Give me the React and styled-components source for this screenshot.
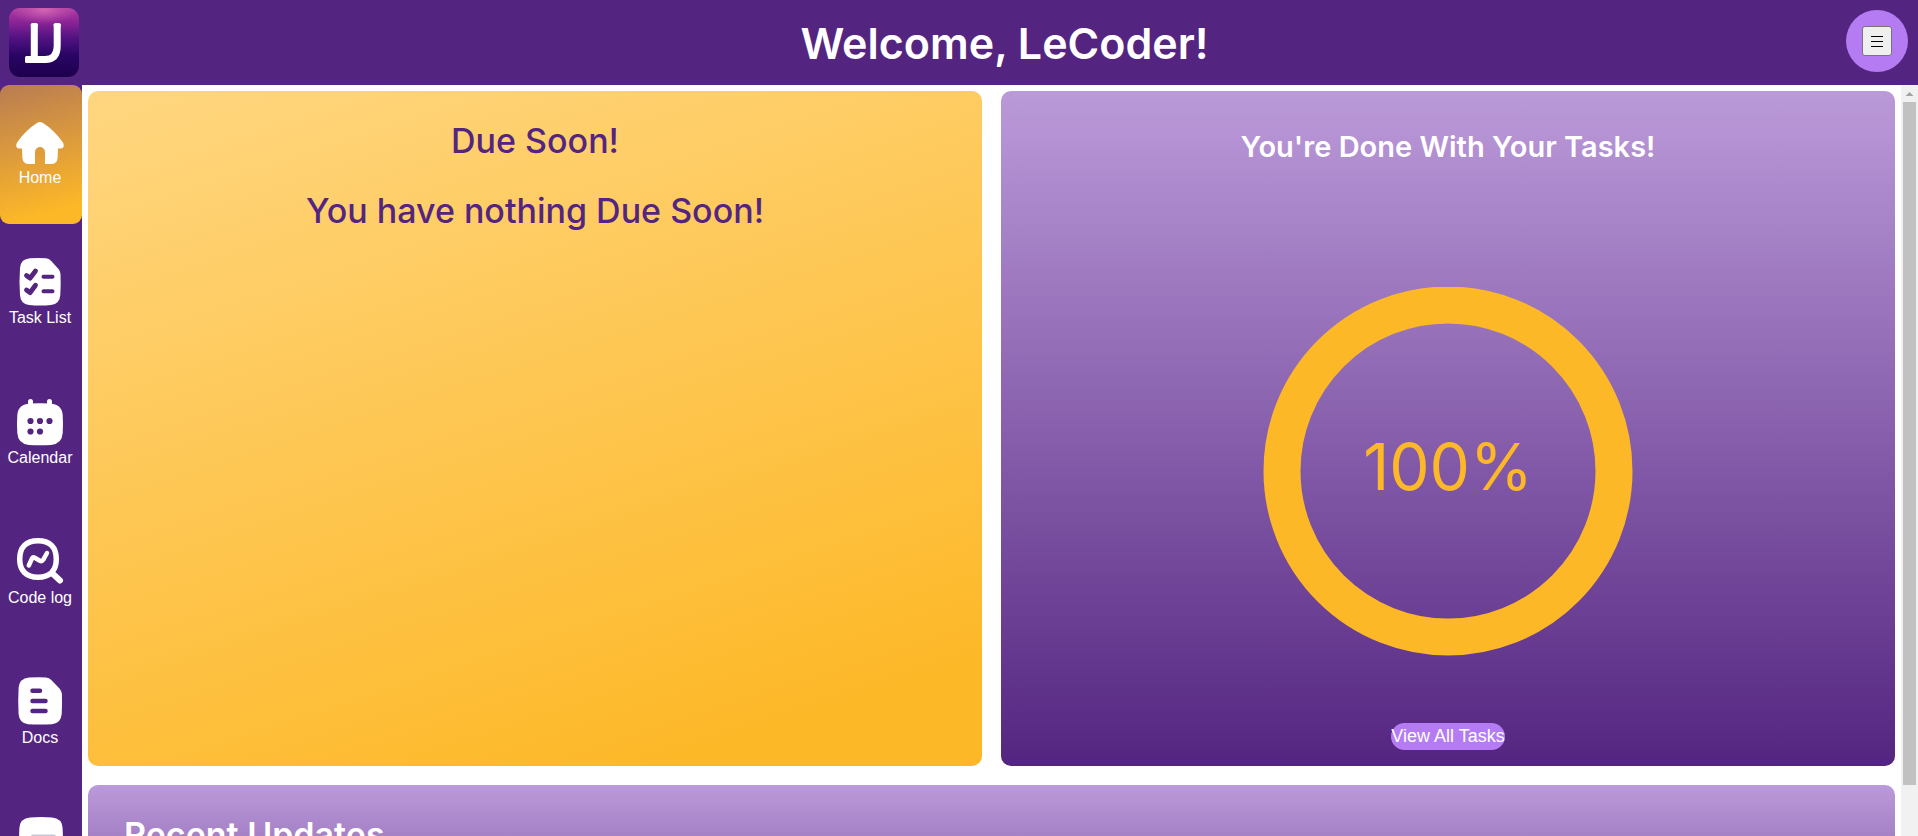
import React from "react";
import styled, { createGlobalStyle } from "styled-components";

const purple = "#542580";
const amber = "#fdb827";
const lilac = "#bb9ad9";
const violet = "#b57bf3";
const headingFont = `Inter, "Liberation Sans", Arial, sans-serif`;

const GlobalStyle = createGlobalStyle`
  *, *::before, *::after { box-sizing: border-box; }
  html, body, #root { height: 100%; }
  body {
    margin: 0;
    overflow: hidden;
    background: #fff;
    font-family: "Liberation Sans", Arial, sans-serif;
  }
  h1, h2, p { margin: 0; }
`;

const Shell = styled.div`
  display: grid;
  grid-template: 85px minmax(0, 1fr) / 82px minmax(0, 1fr);
  height: 100%;
`;

const Header = styled.header`
  grid-column: 1 / -1;
  display: flex;
  align-items: center;
  padding: 0 10px 0 9px;
  background: ${purple};
`;

const LogoLink = styled.a`
  display: block;
  width: 70px;
  height: 70px;
  margin-right: 12px;
`;

const Title = styled.h1`
  flex: 1;
  padding-left: 72px;
  color: #fff;
  font-family: ${headingFont};
  font-size: 43px;
  font-weight: 600;
  line-height: 52px;
  text-align: center;
`;

const Avatar = styled.div`
  display: flex;
  align-items: center;
  justify-content: center;
  width: 62px;
  height: 62px;
  margin-bottom: 3px;
  border-radius: 50%;
  background: ${violet};
`;

const MenuButton = styled.button`
  display: flex;
  align-items: center;
  justify-content: center;
  width: 30px;
  height: 30px;
  padding: 0;
  border: 1px solid #767676;
  border-radius: 3px;
  background: #efefef;
  color: #000;
`;

const Sidebar = styled.nav`
  display: flex;
  flex-direction: column;
  gap: 1px;
  overflow: hidden;
  background: ${purple};
`;

const NavItem = styled.a`
  display: flex;
  flex: none;
  flex-direction: column;
  align-items: center;
  height: 139px;
  padding: 30px 2px 0 0;
  border-radius: 9px;
  background: ${(p) => (p.$active ? `linear-gradient(165deg, #b97c52 0%, ${amber} 88%)` : "transparent")};
  color: #fff;
  font-size: 16px;
  line-height: 18px;
  text-decoration: none;
  white-space: nowrap;
`;

const Main = styled.div`
  display: flex;
  min-height: 0;
`;

const Scroller = styled.main`
  flex: 1;
  display: flex;
  flex-direction: column;
  gap: 19px;
  padding: 6px;
  overflow-y: auto;
  scrollbar-width: none;
`;

const Columns = styled.div`
  display: grid;
  flex: none;
  grid-template-columns: repeat(2, minmax(0, 1fr));
  gap: 19px;
`;

const Card = styled.section`
  display: flex;
  flex-direction: column;
  align-items: center;
  border-radius: 10px;
  background: linear-gradient(180deg, ${lilac}, ${purple});
  color: #fff;
`;

const DueCard = styled(Card)`
  gap: 26px;
  padding: 28px 16px 16px;
  background: linear-gradient(162deg, #ffd680 0%, ${amber} 90%);
  color: ${purple};
`;

const DueText = styled.h2`
  font-family: ${headingFont};
  font-size: 34px;
  font-weight: 500;
  line-height: 44px;
`;

const ProgressCard = styled(Card)`
  padding: 36px 16px 16px;
`;

const CardTitle = styled.h2`
  font-family: ${headingFont};
  font-size: 29px;
  font-weight: 600;
  line-height: 40px;
`;

const Ring = styled.svg`
  display: block;
  width: 370px;
  height: 370px;
  margin: 120px 0 66px;
`;

const RingText = styled.text`
  fill: ${amber};
  font-family: ${headingFont};
  font-size: 64px;
  font-weight: 400;
  text-anchor: middle;
`;

const ViewButton = styled.button`
  height: 27px;
  padding: 0;
  border: 0;
  border-radius: 14px;
  background: ${violet};
  color: #fff;
  font: 18px/27px "Liberation Sans", Arial, sans-serif;
`;

const UpdatesCard = styled(Card)`
  flex: none;
  align-items: flex-start;
  min-height: 240px;
  padding: 28px 36px;
`;

const UpdatesTitle = styled.h2`
  font-family: ${headingFont};
  font-size: 34px;
  font-weight: 600;
  line-height: 44px;
`;

const Rail = styled.div`
  display: flex;
  flex: none;
  flex-direction: column;
  align-items: center;
  width: 17px;
  background: #f1f1f1;
`;

const RailArrow = styled.svg`
  display: block;
  flex: none;
  width: 17px;
  height: 17px;
`;

const RailThumb = styled.div`
  width: 13px;
  height: 91%;
  background: #c1c1c1;
`;

const IconBox = styled.svg`
  display: block;
  width: 54px;
  height: 54px;
  overflow: visible;
`;

const Cut = styled.g`
  fill: none;
  stroke: ${(p) => p.$tone || purple};
  stroke-width: ${(p) => p.$width || 4};
  stroke-linecap: round;
  stroke-linejoin: round;
`;

const Icon = ({ children }) => (
  <IconBox viewBox="0 0 54 54" fill="#fff" aria-hidden="true">
    {children}
  </IconBox>
);

const HomeIcon = () => (
  <Icon>
    <path d="M24 8Q27 6.200 30 8C38 13 44.500 20 49.700 27.200C51.700 30.500 50.700 33.300 48 33.500H45L44.600 43Q44 49 38 49H32V37A5 5 0 0 0 22 37V49H16Q10 49 9.400 43L9 33.500H6C3.300 33.300 2.300 30.500 4.300 27.200C9.500 20 16 13 24 8Z" />
  </Icon>
);

const TaskIcon = () => (
  <Icon>
    <path d="M17 3.200Q25 2.700 33 3.200Q36 3.500 38 5.700L45.500 14Q47.300 16 47.500 19Q48 29 47.300 40Q46.800 49 38 50Q27 51 16 50Q7.500 49 7 40Q6 27 7 13Q7.500 4 17 3.200Z" />
    <Cut>
      <path d="M13.500 20.500L17 23.200L22.500 16M13.500 35L17 37.700L22.500 30.300" strokeWidth="4.800" />
      <path d="M30.500 21.700H39.500M30.500 36.200H39.500" />
    </Cut>
  </Icon>
);

const CalendarIcon = () => (
  <Icon>
    <path d="M17 8.600Q27 8 37 8.600Q49 9.500 49.700 20Q50.300 29 49.700 38Q49 49 38 49.900Q27 50.500 16 49.900Q5 49 4.300 38Q3.700 29 4.300 20Q5 9.500 17 8.600Z" />
    <Cut $tone="#fff" $width={5}>
      <path d="M17.500 6.500V12M36.500 6.500V12" />
    </Cut>
    <g fill={purple}>
      <circle cx="17.500" cy="26" r="3.100" />
      <circle cx="27" cy="26" r="3.100" />
      <circle cx="36.500" cy="26" r="3.100" />
      <circle cx="17.500" cy="36.500" r="3.100" />
      <circle cx="27" cy="36.500" r="3.100" />
    </g>
  </Icon>
);

const CodeLogIcon = () => (
  <Icon>
    <Cut $tone="#fff" $width={5.5}>
      <path d="M25 5.800C36.800 5.800 43.300 12.200 43.300 24S36.800 42.200 25 42.200S6.700 35.800 6.700 24S13.200 5.800 25 5.800Z" />
      <path d="M39.500 38.500L47 45.500" strokeWidth="6" />
      <path d="M15.800 30.500L19 23.500Q20 21.800 21.800 22.800L26.800 25.800Q28.800 26.800 30.200 24.800L34 18" strokeWidth="4.500" />
    </Cut>
  </Icon>
);

const DocsIcon = () => (
  <Icon>
    <path d="M16 2.600Q25 2 33 2.500Q36 2.700 38.300 5L46.500 13.500Q48.700 16 48.900 19Q49.300 29 48.700 39Q48 48.300 39 49.200Q27 50 15 49.200Q6.300 48.300 5.600 39Q4.800 26 5.600 13Q6.300 3.500 16 2.600Z" />
    <Cut $width={4.5}>
      <path d="M19.500 15.700H27M19.500 26H32.500M19.500 36H32.500" />
    </Cut>
  </Icon>
);

const NotesIcon = () => (
  <Icon>
    <path d="M17 2.600Q28 1.600 39 2.600Q49 3.500 49.600 13Q50.300 26 49.600 39Q49 49 39 49.500H17Q7 49 6.400 39Q5.700 26 6.400 13Q7 3.500 17 2.600Z" />
    <Cut $tone="#c9c5d8">
      <path d="M20 21.500H41" />
    </Cut>
  </Icon>
);

const Logo = () => (
  <svg width="70" height="70" viewBox="0 0 70 70" role="img" aria-label="Logo">
    <defs>
      <linearGradient id="logo-base" x1="0" y1="0" x2="0" y2="1">
        <stop offset="0" stopColor="#b03fa3" />
        <stop offset="0.2" stopColor="#8c2496" />
        <stop offset="0.42" stopColor="#541383" />
        <stop offset="0.68" stopColor="#2a0565" />
        <stop offset="1" stopColor="#1d004c" />
      </linearGradient>
      <radialGradient id="logo-glow" gradientUnits="userSpaceOnUse" cx="0" cy="0" r="1" gradientTransform="translate(35 2) scale(34 14)">
        <stop offset="0" stopColor="#d465b3" />
        <stop offset="1" stopColor="#c050ac" stopOpacity="0" />
      </radialGradient>
    </defs>
    <rect width="70" height="69" rx="11" fill="url(#logo-base)" />
    <rect width="70" height="69" rx="11" fill="url(#logo-glow)" />
    <g fill="none" stroke="#fff" strokeLinejoin="round">
      <path d="M25.300 16V52" strokeWidth="7" />
      <path d="M48.200 16V38Q48.200 51.500 36 51.500H17" strokeWidth="7" />
    </g>
    <g fill="#fff">
      <rect x="21.800" y="15" width="7" height="4" rx="1.500" />
      <rect x="44.700" y="15" width="7" height="4" rx="1.500" />
      <rect x="16" y="48" width="4" height="7" rx="1.500" />
    </g>
  </svg>
);

const navItems = [
  { label: "Home", icon: HomeIcon, active: true },
  { label: "Task List", icon: TaskIcon },
  { label: "Calendar", icon: CalendarIcon },
  { label: "Code log", icon: CodeLogIcon },
  { label: "Docs", icon: DocsIcon },
];

export default function App() {
  return (
    <>
      <GlobalStyle />
      <Shell>
        <Header>
          <LogoLink href="#">
            <Logo />
          </LogoLink>
          <Title>Welcome, LeCoder!</Title>
          <Avatar>
            <MenuButton type="button" aria-label="Menu">
              <svg width="14" height="14" viewBox="0 0 14 14" stroke="currentColor" strokeWidth="1" aria-hidden="true">
                <path d="M1 2.500H13M1 7.500H13M1 12.500H13" />
              </svg>
            </MenuButton>
          </Avatar>
        </Header>

        <Sidebar>
          {navItems.map(({ label, icon: ItemIcon, active }) => (
            <NavItem key={label} href="#" $active={active}>
              <ItemIcon />
              {label}
            </NavItem>
          ))}
          <NavItem href="#" aria-label="Notes">
            <NotesIcon />
          </NavItem>
        </Sidebar>

        <Main>
          <Scroller>
            <Columns>
              <DueCard>
                <DueText>Due Soon!</DueText>
                <DueText as="p">You have nothing Due Soon!</DueText>
              </DueCard>
              <ProgressCard>
                <CardTitle>You're Done With Your Tasks!</CardTitle>
                <Ring viewBox="0 0 370 370" role="img" aria-label="100% of tasks done">
                  <circle cx="185" cy="184" r="166" fill="none" stroke={amber} strokeWidth="37" />
                  <RingText x="185" y="203">100%</RingText>
                </Ring>
                <ViewButton type="button">View All Tasks</ViewButton>
              </ProgressCard>
            </Columns>
            <UpdatesCard>
              <UpdatesTitle>Recent Updates</UpdatesTitle>
            </UpdatesCard>
          </Scroller>
          <Rail aria-hidden="true">
            <RailArrow viewBox="0 0 17 17">
              <path d="M4.500 11L8.500 7L12.500 11Z" fill="#a3a3a3" />
            </RailArrow>
            <RailThumb />
          </Rail>
        </Main>
      </Shell>
    </>
  );
}
